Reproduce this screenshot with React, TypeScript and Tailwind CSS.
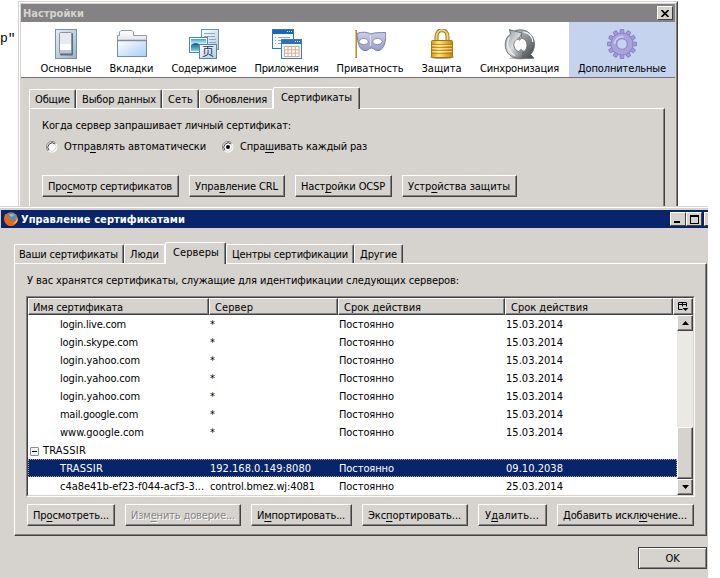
import { useLayoutEffect, useRef, useState } from "react";
import type { ReactNode } from "react";

/* Single-line label whose tracking is adjusted so that it spans `w` pixels. */
function Fit({ w, children, className = "" }: { w: number; children: ReactNode; className?: string }) {
  const ref = useRef<HTMLSpanElement>(null);
  const [spacing, setSpacing] = useState(0);
  useLayoutEffect(() => {
    const el = ref.current;
    if (!el) return;
    const count = (el.textContent || "").length || 1;
    setSpacing((w - el.getBoundingClientRect().width) / count);
  }, [w]);
  return (
    <span ref={ref} className={`inline-block shrink-0 whitespace-pre ${className}`} style={{ letterSpacing: spacing }}>
      {children}
    </span>
  );
}

/* Turns "Про_смотр" into a label with the letter after the underscore underlined. */
function Key({ text }: { text: string }) {
  const i = text.indexOf("_");
  if (i < 0) return <>{text}</>;
  return (
    <>
      {text.slice(0, i)}
      <span className="underline decoration-1 underline-offset-2">{text[i + 1]}</span>
      {text.slice(i + 2)}
    </>
  );
}

function PushButton({ text, tw, className, disabled }: { text: string; tw: number; className: string; disabled?: boolean }) {
  return (
    <button
      className={`flex h-[22px] shrink-0 items-center border border-t-white border-l-white border-r-[#424142] border-b-[#424142] pl-[5px] pt-[2px] shadow-[inset_-1px_-1px_0_#848284] ${
        disabled ? "text-[#848284] [text-shadow:1px_1px_0_#fff]" : ""
      } ${className}`}
    >
      <Fit w={tw}>
        <Key text={text} />
      </Fit>
    </button>
  );
}

function Tab({ text, tw, className, active }: { text: string; tw: number; className: string; active?: boolean }) {
  return (
    <div
      className={`flex shrink-0 items-center rounded-t-[2px] border-t border-l border-white border-r border-r-[#424142] bg-[#d6d3ce] shadow-[inset_-1px_0_0_#848284] ${
        active ? "z-10 -mb-px h-[22px] pb-px pl-[7px]" : "h-[19px] pl-[5px] pt-[2px]"
      } ${className}`}
    >
      <Fit w={tw}>{text}</Fit>
    </div>
  );
}

function GeneralIcon() {
  return (
    <svg width="30" height="30" viewBox="0 0 30 30">
      <defs>
        <linearGradient id="gen" x1="0" y1="0" x2="1" y2="1">
          <stop offset="0" stopColor="#e4edf4" />
          <stop offset="1" stopColor="#9db3c8" />
        </linearGradient>
      </defs>
      <rect x="4.5" y="0.5" width="21" height="29" fill="url(#gen)" stroke="#7593ad" />
      <rect x="9" y="4" width="13" height="22.5" rx="1" fill="#5f6c7b" />
      <rect x="8.5" y="3.5" width="12" height="21" rx="1" fill="#e9e7ef" stroke="#8a94a3" />
      <rect x="9" y="15" width="11" height="6" fill="#fff" />
      <rect x="9" y="21" width="11" height="3" fill="#bfc5d2" />
    </svg>
  );
}

function TabsIcon() {
  return (
    <svg width="30" height="30" viewBox="0 0 30 30">
      <defs>
        <linearGradient id="fold" x1="0" y1="0" x2="1" y2="1">
          <stop offset="0" stopColor="#fff" />
          <stop offset="1" stopColor="#a9ccf5" />
        </linearGradient>
        <linearGradient id="flap" x1="0" y1="0" x2="0" y2="1">
          <stop offset="0" stopColor="#fff" />
          <stop offset="1" stopColor="#e0e3e8" />
        </linearGradient>
      </defs>
      <path d="M.5 12V6.500h2V3l1.500-1.500h11L16.500 3v3.500h13V12z" fill="url(#flap)" stroke="#8c9cad" />
      <rect x="0.500" y="11.500" width="29" height="16" fill="url(#fold)" stroke="#6f8db5" />
      <path d="M1 11.500h28" stroke="#7e8ca0" strokeWidth="1.500" />
    </svg>
  );
}

function ContentIcon() {
  return (
    <svg width="30" height="30" viewBox="0 0 30 30">
      <defs>
        <linearGradient id="doc" x1="0" y1="0" x2="1" y2="1">
          <stop offset="0" stopColor="#fff" />
          <stop offset="1" stopColor="#b5cce0" />
        </linearGradient>
        <linearGradient id="sea" x1="0" y1="0" x2="0" y2="1">
          <stop offset="0" stopColor="#3da4e4" />
          <stop offset=".45" stopColor="#e5f7fd" />
          <stop offset=".55" stopColor="#1880a5" />
          <stop offset="1" stopColor="#84d4d5" />
        </linearGradient>
      </defs>
      <rect x="12.500" y="0.500" width="17" height="20" fill="url(#doc)" stroke="#6f93b3" />
      <path d="M15 4.500h11M15 7.500h11M20 10.500h7M20 13.500h7" stroke="#8caac4" />
      <rect x="0.500" y="8.500" width="18" height="15" fill="#fff" stroke="#4a87bd" />
      <rect x="2" y="10" width="15" height="12" fill="url(#sea)" />
      <path d="M2 16q5-4 9 0z" fill="#176487" />
      <rect x="10.500" y="15.500" width="17" height="14" fill="url(#doc)" stroke="#5c85aa" />
      <text x="13" y="27" fontSize="12" fill="#1d3a60" className="font-['Noto_Sans_CJK_SC',sans-serif]">页</text>
    </svg>
  );
}

function AppsIcon() {
  return (
    <svg width="30" height="30" viewBox="0 0 30 30">
      <rect x="0.500" y="0.500" width="21" height="19" fill="#f4f9ff" stroke="#3274bd" />
      <rect x="1" y="1" width="20" height="4" fill="#1e65b9" />
      <path d="M15 2.500h1m1 0h1m1 0h1" stroke="#d9e9fb" />
      <path d="M6 8.500h12M6 11.500h12M6 14.500h8M3 8.500h1M3 11.500h1M3 14.500h1" stroke="#8fa7c7" />
      <rect x="9.500" y="10.500" width="20" height="19" fill="#edf5fd" stroke="#3b7ac0" />
      <rect x="10" y="11" width="19" height="4" fill="#2870c1" />
      <path d="M23 12.500h1m1 0h1m1 0h1" stroke="#d9e9fb" />
      <rect x="12.500" y="17.500" width="14.500" height="10" fill="#fff" stroke="#d1a888" />
      <path d="M16 17v11M19.700 17v11M23.400 17v11M12 20.800h15M12 24.200h15" stroke="#d6ae91" />
    </svg>
  );
}

function MaskIcon() {
  return (
    <svg width="32" height="30" viewBox="0 0 32 30">
      <defs>
        <linearGradient id="mask" x1="0" y1="0" x2="0" y2="1">
          <stop offset="0" stopColor="#cdcee6" />
          <stop offset="1" stopColor="#989bc4" />
        </linearGradient>
      </defs>
      <path d="M2 1v28" stroke="#b88a2c" strokeWidth="2" />
      <path d="M1.500 2v26" stroke="#f1d67b" strokeWidth=".8" />
      <path d="M3 4.500C8 2.500 13 3 17 5c4-2 10-1 14.500-1.500C32.500 12 30 20 25 21.500c-4 1-5-2.500-7.500-2.500S14 22.500 10 21.500C5.500 20.500 3.500 14 3 4.500z" fill="url(#mask)" stroke="#7a7ea8" />
      <path d="M5 12.500C7 8 13 8.500 14.500 13c-2 3.500-8 3.500-9.500-.5zM18.500 13c1.500-4.500 7.500-5 10-.5-2 4-8 4-10 .5z" fill="#fff" stroke="#777ba2" strokeWidth=".8" />
      <path d="M16.500 6v11" stroke="#e2e2f2" strokeWidth=".8" />
    </svg>
  );
}

function LockIcon() {
  return (
    <svg width="26" height="30" viewBox="0 0 26 30">
      <defs>
        <linearGradient id="lock" x1="0" y1="0" x2="1" y2="0">
          <stop offset="0" stopColor="#d2951f" />
          <stop offset=".35" stopColor="#ffe477" />
          <stop offset="1" stopColor="#c28416" />
        </linearGradient>
      </defs>
      <ellipse cx="13" cy="28" rx="12" ry="2" fill="#aaa" />
      <path d="M7.500 12V7.500C7.500-.8 18.500-.8 18.500 7.500V12" fill="none" stroke="#9c7b25" strokeWidth="4" />
      <path d="M7.500 12V7.500C7.500-.8 18.500-.8 18.500 7.500V12" fill="none" stroke="#f0d276" strokeWidth="2" />
      <rect x="2.500" y="11.500" width="21" height="17" rx="1" fill="url(#lock)" stroke="#a87513" />
      <path d="M3 15.500h20M3 18.500h20M3 21.500h20M3 24.500h20" stroke="#a97213" strokeOpacity=".65" />
      <path d="M3 16.500h20M3 19.500h20M3 22.500h20" stroke="#fff2a5" strokeOpacity=".6" />
    </svg>
  );
}

function SyncIcon() {
  return (
    <svg width="32" height="31" viewBox="0 0 32 31">
      <defs>
        <linearGradient id="syncLight" x1="0" y1="0" x2="1" y2="1">
          <stop offset="0" stopColor="#8b9093" />
          <stop offset=".5" stopColor="#d9dbdc" />
          <stop offset="1" stopColor="#6b7073" />
        </linearGradient>
        <linearGradient id="syncDark" x1="0" y1="0" x2="1" y2="1">
          <stop offset="0" stopColor="#c9ccce" />
          <stop offset=".5" stopColor="#8b8f92" />
          <stop offset="1" stopColor="#3f4447" />
        </linearGradient>
      </defs>
      <ellipse cx="17" cy="29.200" rx="12" ry="1.200" fill="#bfbfbf" />
      <path d="M5.500.800L10 2.300C20-2.500 30.500 5 30.500 15c0 4.500-1.500 8-4 10.500l3.500 3.700H16.500l1.500-6c3-.5 5-3.500 5-7 0-4-2.500-6.500-6-7.200l.500-4.500-5.500 2z" fill="url(#syncDark)" stroke="#5a5f62" strokeWidth=".8" />
      <path d="M5.500.800L18 4l-3.500 6.500C11 11 9.500 13.500 10 17c.4 3 3 5.500 6 6l3-2.500-.5 8.500C8 31 1 24 1.200 15.500 1.300 11 3 7.500 6.500 5z" fill="url(#syncLight)" stroke="#5a5f62" strokeWidth=".8" />
      <path d="M5.500 8C1.500 15 4 23 11 26.500" fill="none" stroke="#f2f3f3" strokeWidth="1.300" />
      <path d="M19.500 3C25 4 28.500 8 28.800 13" fill="none" stroke="#eceeef" strokeWidth="1.300" />
      <circle cx="16.300" cy="15.800" r="5.600" fill="#fff" />
      <path d="M12.500 8.500l3 3.500 2.500-3zM20 23l-3-3.500-2.500 3z" fill="#8f9497" />
    </svg>
  );
}

function GearIcon() {
  const teeth = [0, 30, 60, 90, 120, 150, 180, 210, 240, 270, 300, 330];
  return (
    <svg width="30" height="30" viewBox="0 0 30 30">
      {teeth.map((a) => (
        <path key={a} d="M12.800 5l.5-4.500h3.400l.5 4.500z" fill="#a39bd6" stroke="#7f7abf" strokeWidth=".8" transform={`rotate(${a} 15 15)`} />
      ))}
      <circle cx="15" cy="15" r="8.200" fill="none" stroke="#8781c5" strokeWidth="6" />
      <circle cx="15" cy="15" r="8.200" fill="none" stroke="#aaa2da" strokeWidth="4.800" />
      <path d="M7.500 15a7.500 7.500 0 0 1 9-7.300" fill="none" stroke="#d5cff0" strokeWidth="1.500" />
      <circle cx="15" cy="15" r="5.200" fill="#c6d3ef" stroke="#8a84c7" strokeWidth=".8" />
    </svg>
  );
}

function FirefoxIcon() {
  return (
    <svg width="14" height="14" viewBox="0 0 14 14" className="shrink-0">
      <circle cx="7" cy="7" r="6.800" fill="#e3701c" />
      <circle cx="7.300" cy="5.600" r="4.600" fill="#4b91cf" />
      <path d="M5 3c2-2 5-1 6 1-2-1-3 0-3 1z" fill="#8bc6ea" />
      <path d="M.8 3L2 1.500 3 3.500l3 .8-1 2 2.500 1.200L6 9l5-.5 1.500-5C15 8 12 14 7 14S-1 9 .8 3z" fill="#e66a16" />
      <path d="M12.300 3c1.500 4-.3 7.500-3.300 8.500 2.500.3 4-1 4.700-3.500z" fill="#fbd64c" />
    </svg>
  );
}

const sections = [
  { name: "Основные", tw: 51, box: "w-[70px]", icon: <GeneralIcon /> },
  { name: "Вкладки", tw: 44, box: "w-[61px]", icon: <TabsIcon /> },
  { name: "Содержимое", tw: 65, box: "w-[84px]", icon: <ContentIcon /> },
  { name: "Приложения", tw: 64, box: "w-[81px]", icon: <AppsIcon /> },
  { name: "Приватность", tw: 67, box: "w-[86px]", icon: <MaskIcon /> },
  { name: "Защита", tw: 40, box: "w-[57px]", icon: <LockIcon /> },
  { name: "Синхронизация", tw: 79, box: "w-[99px]", icon: <SyncIcon /> },
  { name: "Дополнительные", tw: 88, box: "w-[106px] bg-[#c6d3ef]", icon: <GearIcon /> },
];

const hosts: [string, number][] = [
  ["login.live.com", 66],
  ["login.skype.com", 78],
  ["login.yahoo.com", 80],
  ["login.yahoo.com", 80],
  ["login.yahoo.com", 80],
  ["mail.google.com", 78],
  ["www.google.com", 84],
];

function Radio({ checked }: { checked?: boolean }) {
  return (
    <svg width="12" height="12" viewBox="0 0 12 12" className="shrink-0">
      <circle cx="6" cy="6" r="5.500" fill="#fff" />
      <path d="M2.100 9.900A5.500 5.500 0 0 1 9.900 2.100" fill="none" stroke="#848284" />
      <path d="M2.900 9.100A4.400 4.400 0 0 1 9.100 2.900" fill="none" stroke="#424142" />
      <path d="M9.100 2.900A4.400 4.400 0 0 1 2.900 9.100" fill="none" stroke="#d6d3ce" />
      {checked && <circle cx="6" cy="6" r="2" fill="#000" />}
    </svg>
  );
}

function PreferencesWindow() {
  return (
    <div className="ml-[18px] h-[205px] w-[660px] overflow-hidden border-t border-l border-r border-[#d6d3ce] border-r-[#424142] bg-[#d6d3ce]">
      <div className="h-full border-t border-l border-r border-t-white border-l-white border-r-[#848284] px-px pt-px">
        <div className="flex h-[18px] items-center justify-between bg-[#848284] pl-[2px] pr-[2px]">
          <Fit w={61} className="pt-[2px] font-bold text-[#d6d3ce]">Настройки</Fit>
          <div className="flex h-[14px] w-4 items-center justify-center border border-t-white border-l-white border-r-[#424142] border-b-[#424142] bg-[#d6d3ce]">
            <svg width="8" height="7" viewBox="0 0 8 7">
              <path d="M.5 0l7 7M7.500 0l-7 7" stroke="#000" strokeWidth="1.600" />
            </svg>
          </div>
        </div>
        <div className="flex h-[56px] border-b border-[#737173] bg-white pl-[10px]">
          {sections.map((s) => (
            <div key={s.name} className={`flex shrink-0 flex-col items-center pt-[7px] ${s.box}`}>
              <div className="flex h-[33px] items-start">{s.icon}</div>
              <Fit w={s.tw} className="leading-[14px]">{s.name}</Fit>
            </div>
          ))}
        </div>
        <div className="pl-2 pt-[9px]">
          <div className="flex h-[21px] items-end">
            <Tab text="Общие" tw={35} className="w-[47px]" />
            <Tab text="Выбор данных" tw={74} className="w-[86px]" />
            <Tab text="Сеть" tw={25} className="w-[37px]" />
            <Tab text="Обновления" tw={62} className="w-[74px] border-r-white! shadow-none!" />
            <Tab text="Сертификаты" tw={71} className="w-[87px]" active />
          </div>
          <div className="flex h-[100px] w-[636px] flex-col border border-b-0 border-white border-r-[#424142] pl-3 shadow-[inset_-1px_0_0_#848284]">
            <Fit w={249} className="mt-[9px] w-fit leading-4">Когда сервер запрашивает личный сертификат:</Fit>
            <div className="mt-[5px] flex h-4 items-center pl-1">
              <Radio />
              <Fit w={142} className="ml-[6px]"><Key text="Отпр_авлять автоматически" /></Fit>
              <div className="ml-[16px] flex items-center">
                <Radio checked />
                <Fit w={127} className="ml-[6px]"><Key text="Спра_шивать каждый раз" /></Fit>
              </div>
            </div>
            <div className="mt-[20px] flex gap-[10px]">
              <PushButton text="Про_смотр сертификатов" tw={124} className="w-[137px]" />
              <PushButton text="Упра_вление CRL" tw={83} className="w-[96px]" />
              <PushButton text="Наст_ройки OCSP" tw={84} className="w-[97px]" />
              <PushButton text="Устр_ойства защиты" tw={102} className="w-[115px]" />
            </div>
          </div>
        </div>
      </div>
    </div>
  );
}

const headCell =
  "flex h-[17px] shrink-0 items-center border border-t-white border-l-white border-r-[#424142] border-b-[#424142] bg-[#d6d3ce] shadow-[inset_-1px_-1px_0_#848284]";
const scrollPart =
  "flex w-4 shrink-0 items-center justify-center border border-t-white border-l-white border-r-[#424142] border-b-[#424142] bg-[#d6d3ce] shadow-[inset_-1px_-1px_0_#848284]";

function Row({ name, nw, server, sw, until, selected }: { name: string; nw: number; server: string; sw: number; until: string; selected?: boolean }) {
  return (
    <div className={`flex h-[18px] items-center border border-dotted pt-[2px] ${selected ? "border-[#a9a68c] bg-[#08246b] text-white" : "border-transparent"}`}>
      <div className="h-[14px] w-[181px] shrink-0 pl-[31px]"><Fit w={nw} className="align-top">{name}</Fit></div>
      <div className="h-[14px] w-[129px] shrink-0"><Fit w={sw} className="align-top">{server}</Fit></div>
      <div className="h-[14px] w-[167px] shrink-0"><Fit w={55} className="align-top">Постоянно</Fit></div>
      <Fit w={57}>{until}</Fit>
    </div>
  );
}

function CertificateTree() {
  return (
    <div className="mt-[7px] w-[669px] border border-t-[#848284] border-l-[#848284] border-r-white border-b-white">
      <div className="h-[199px] border border-t-[#424142] border-l-[#424142] border-r-[#d6d3ce] border-b-[#d6d3ce] bg-white">
        <div className="flex h-[17px]">
          <div className={`${headCell} w-[181px] pl-[4px] pt-[3px]`}><Fit w={90}>Имя сертификата</Fit></div>
          <div className={`${headCell} w-[129px] pl-[5px] pt-[3px]`}><Fit w={38}>Сервер</Fit></div>
          <div className={`${headCell} w-[167px] pl-[5px] pt-[3px]`}><Fit w={77}>Срок действия</Fit></div>
          <div className={`${headCell} w-[168px] pl-[5px] pt-[3px]`}><Fit w={77}>Срок действия</Fit></div>
          <div className={`${headCell} w-[20px] pl-[4px]`}>
            <svg width="11" height="10" viewBox="0 0 11 10" className="shrink-0">
              <path d="M.5.500h8v4M.5.500v7h4M.5 2.500h8M4.500.500v4" fill="none" stroke="#000" />
              <path d="M4.500 6h6L7.500 9z" />
            </svg>
          </div>
        </div>
        <div className="flex h-[180px]">
          <div className="w-[649px] shrink-0">
            {hosts.map(([name, nw], i) => (
              <Row key={i} name={name} nw={nw} server="*" sw={7} until="15.03.2014" />
            ))}
            <div className="flex h-[18px] items-center pl-[2px] pt-[2px]">
              <div className="flex size-[9px] shrink-0 items-center justify-center rounded-[1px] border border-[#7b8ebd] bg-[#f3f3f8]">
                <div className="h-px w-[5px] bg-black" />
              </div>
              <Fit w={43} className="ml-[4px]">TRASSIR</Fit>
            </div>
            <Row name="TRASSIR" nw={43} server="192.168.0.149:8080" sw={101} until="09.10.2038" selected />
            <Row name="c4a8e41b-ef23-f044-acf3-3..." nw={144} server="control.bmez.wj:4081" sw={105} until="25.03.2014" />
          </div>
          <div className="flex w-4 flex-col bg-[#ebe9e6]">
            <div className={`${scrollPart} h-4`}>
              <svg width="7" height="4" viewBox="0 0 7 4"><path d="M3.500 0L7 4H0z" /></svg>
            </div>
            <div className={`${scrollPart} mt-auto h-[52px]`} />
            <div className={`${scrollPart} h-4`}>
              <svg width="7" height="4" viewBox="0 0 7 4"><path d="M0 0h7L3.500 4z" /></svg>
            </div>
          </div>
        </div>
      </div>
    </div>
  );
}

const caption =
  "flex h-[14px] w-4 shrink-0 border border-t-white border-l-white border-r-[#424142] border-b-[#424142] bg-[#d6d3ce]";

function CertificateManager() {
  return (
    <div className="h-[372px] w-[708px] overflow-hidden bg-[#d6d3ce] pt-px">
      <div className="border-t border-white pl-px pt-[2px]">
        <div className="flex h-[18px] items-center overflow-hidden bg-[#08246b] pl-[3px]">
          <FirefoxIcon />
          <Fit w={164} className="ml-[3px] pt-[2px] font-bold text-white">Управление сертификатами</Fit>
          <div className={`${caption} ml-auto items-end pb-[2px] pl-[3px]`}>
            <div className="h-[2px] w-[6px] bg-black" />
          </div>
          <div className={`${caption} items-center justify-center`}>
            <div className="h-[9px] w-[9px] border border-t-2 border-black" />
          </div>
          <div className="ml-[2px] h-[14px] w-[4px] shrink-0 border border-r-0 border-white border-b-[#424142] bg-[#d6d3ce]" />
        </div>
      </div>
      <div className="pl-[14px] pt-[13px]">
        <div className="flex h-[22px] items-end">
          <Tab text="Ваши сертификаты" tw={99} className="w-[110px] pl-[4px]!" />
          <Tab text="Люди" tw={29} className="w-[41px] border-r-white! shadow-none!" />
          <Tab text="Серверы" tw={46} className="w-[61px]" active />
          <Tab text="Центры сертификации" tw={116} className="w-[128px]" />
          <Tab text="Другие" tw={37} className="w-[49px]" />
        </div>
        <div className="h-[273px] w-[693px] border border-white border-r-[#424142] border-b-[#424142] pl-[11px] shadow-[inset_-1px_-1px_0_#848284]">
          <Fit w={432} className="ml-px mt-[9px] leading-4 align-top">У вас хранятся сертификаты, служащие для идентификации следующих серверов:</Fit>
          <CertificateTree />
          <div className="ml-px mt-[7px] flex gap-[10px]">
            <PushButton text="Пр_осмотреть..." tw={76} className="w-[88px]" />
            <PushButton text="Изм_енить доверие..." tw={104} className="w-[116px]" disabled />
            <PushButton text="И_мпортировать..." tw={88} className="w-[101px]" />
            <PushButton text="Экс_портировать..." tw={93} className="w-[106px]" />
            <PushButton text="У_далить..." tw={54} className="w-[69px] pl-[6px]!" />
            <PushButton text="Добавить искл_ючение..." tw={124} className="w-[137px]" />
          </div>
        </div>
      </div>
      <div className="mt-[11px] flex justify-end pr-px">
        <button className="flex h-[22px] w-[69px] items-center justify-center border border-[#424142] pt-[2px] shadow-[inset_1px_1px_0_#fff,inset_-1px_-1px_0_#848284]">
          <Fit w={14}>OK</Fit>
        </button>
      </div>
    </div>
  );
}

export default function App() {
  return (
    <div className="relative h-[578px] w-[720px] overflow-hidden bg-white pt-px font-['DejaVu_Sans_Condensed','DejaVu_Sans',sans-serif] text-[11px] leading-[14px] font-stretch-condensed text-black">
      <div className="absolute left-0 top-[31px] font-['Liberation_Mono',monospace] text-[13px] leading-4">p"</div>
      <PreferencesWindow />
      <CertificateManager />
    </div>
  );
}
